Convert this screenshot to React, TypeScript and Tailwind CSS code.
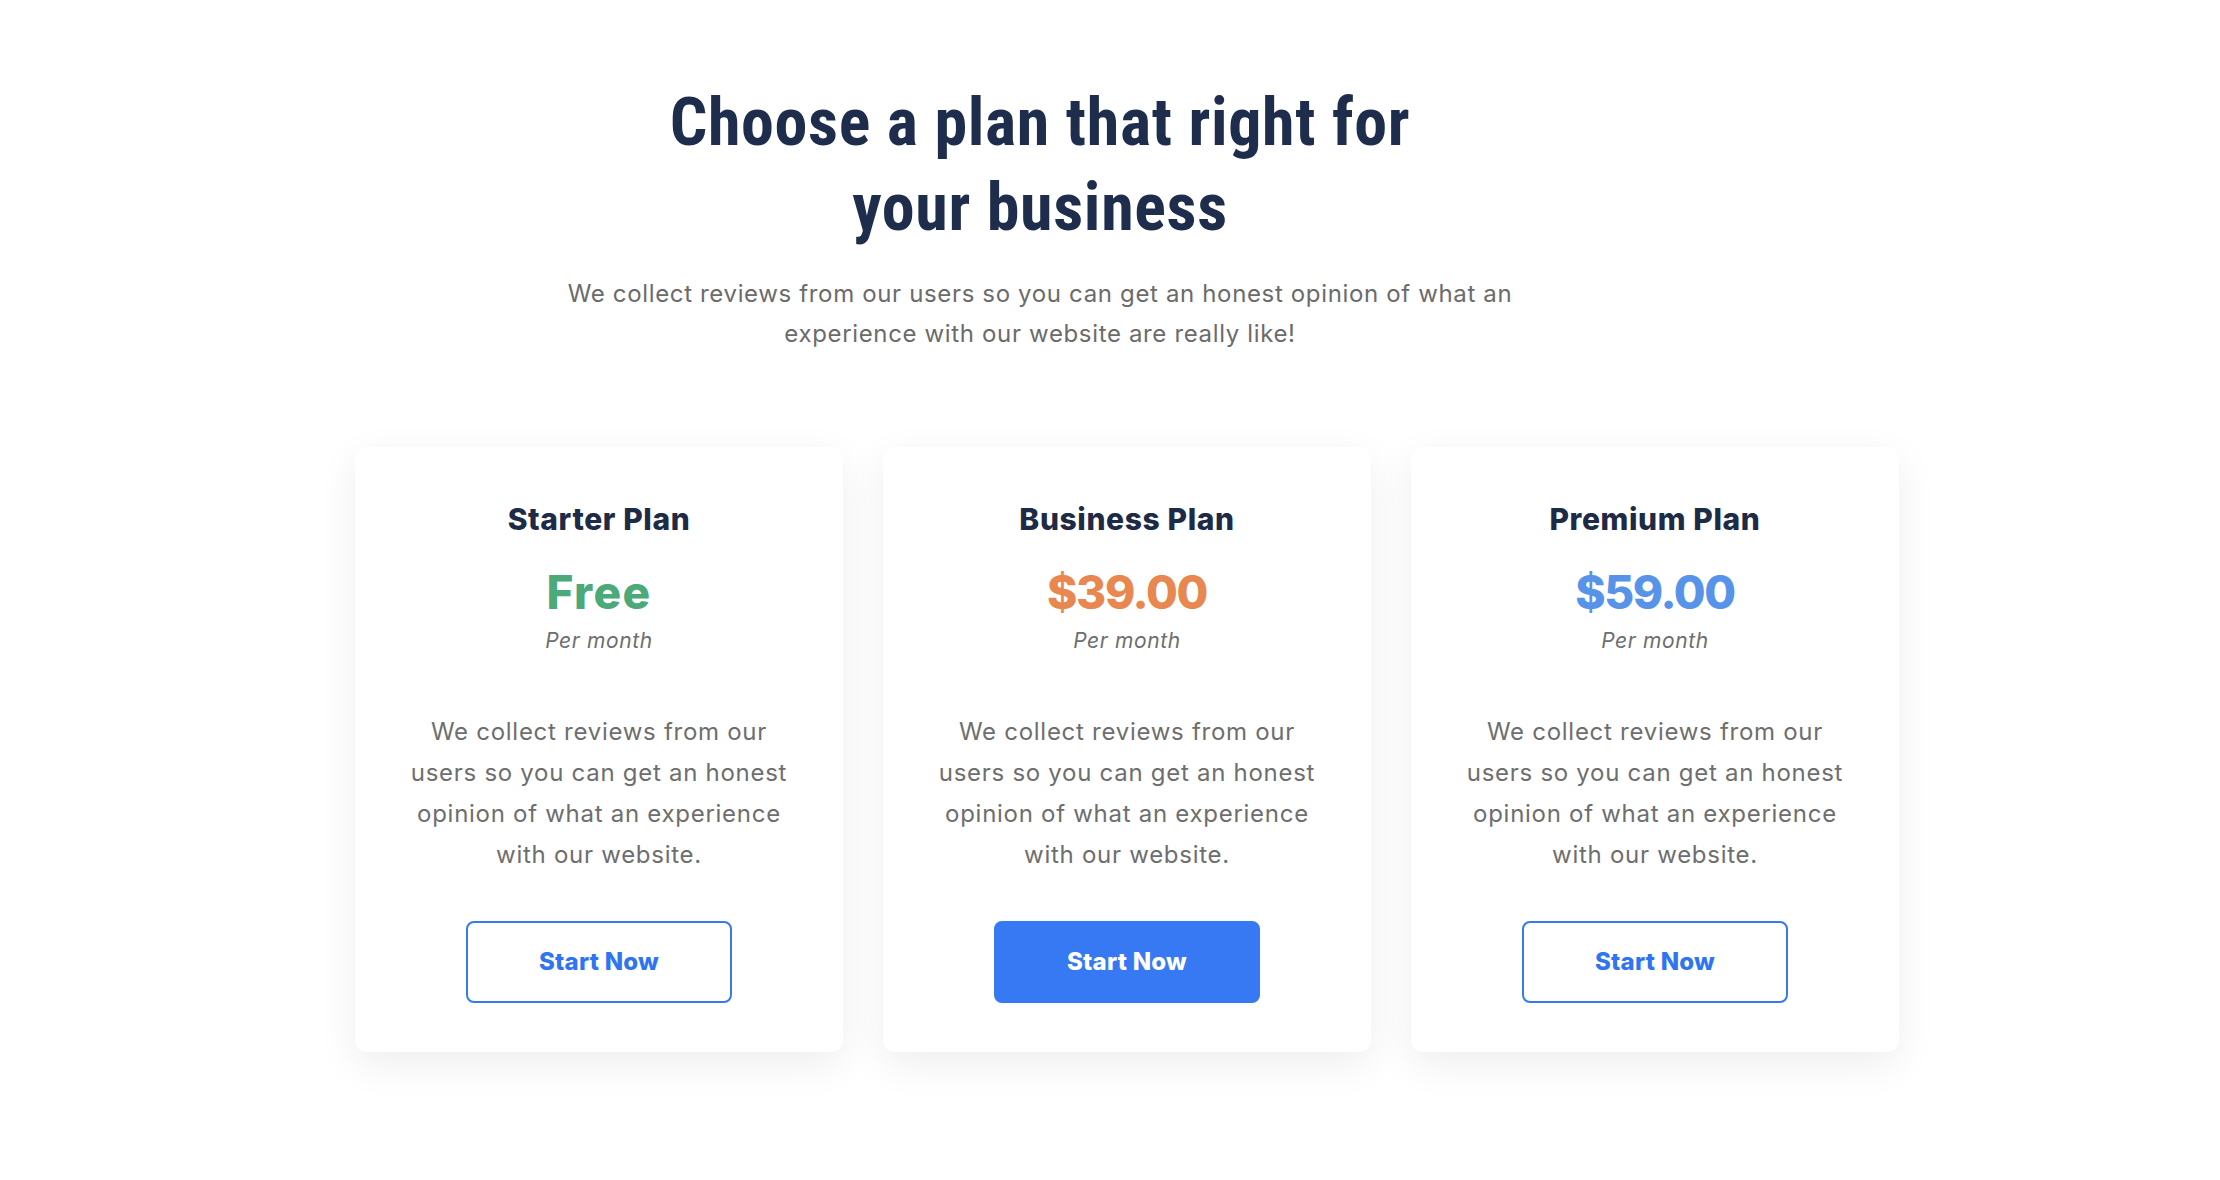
import React from "react";

const plans = [
  { name: "Starter Plan", price: "Free", color: "text-[#4ca97a] tracking-[0.03em]", primary: false },
  { name: "Business Plan", price: "$39.00", color: "text-[#e8874f] tracking-[-0.03em]", primary: true },
  { name: "Premium Plan", price: "$59.00", color: "text-[#5893ea] tracking-[-0.03em]", primary: false },
];

export default function App() {
  return (
    <div className="min-h-[1180px] w-full bg-white font-['Inter',sans-serif]">
      <div className="pl-[355px] pt-[80px] pb-[120px]">
        <div className="flex w-[1370px] flex-col items-center text-center">
          <h1 className="font-['Liberation_Sans_Narrow','Roboto_Condensed','DejaVu_Sans_Condensed','Inter',sans-serif] [font-stretch:condensed] text-[66px] font-bold leading-[85px] tracking-[0.01em] text-[#1e2d4b]">
            Choose a plan that right for
            <br />
            your business
          </h1>
          <p className="mt-[24px] text-[24px] leading-[40px] tracking-[0.027em] text-[#6b6b6b]">
            We collect reviews from our users so you can get an honest opinion of what an
            <br />
            experience with our website are really like!
          </p>
        </div>
        <div className="mt-[93px] flex gap-[40px]">
          {plans.map((p) => (
            <div
              key={p.name}
              className="flex w-[488px] flex-col items-center rounded-[12px] bg-white pt-[52px] pb-[49px] text-center shadow-[0_12px_40px_rgba(0,0,0,0.07)]"
            >
              <h2 className="text-[30px] font-extrabold leading-[40px] tracking-[0.02em] text-[#1d2b47]">{p.name}</h2>
              <div className={`mt-[25px] text-[46px] font-extrabold leading-[56px] ${p.color}`}>{p.price}</div>
              <div className="mt-[6px] text-[21px] italic leading-[30px] tracking-[0.03em] text-[#6e6e6e]">Per month</div>
              <p className="mt-[55px] text-[24px] leading-[41px] tracking-[0.03em] text-[#6e6e6e]">
                We collect reviews from our
                <br />
                users so you can get an honest
                <br />
                opinion of what an experience
                <br />
                with our website.
              </p>
              {p.primary ? (
                <button className="mt-[46px] flex h-[82px] w-[266px] items-center justify-center rounded-[8px] border-2 border-[#3679f3] bg-[#3679f3] text-[24px] font-extrabold tracking-[0.01em] text-white">
                  Start Now
                </button>
              ) : (
                <button className="mt-[46px] flex h-[82px] w-[266px] items-center justify-center rounded-[8px] border-2 border-[#3679f3] bg-white text-[24px] font-extrabold tracking-[0.01em] text-[#2f74f0]">
                  Start Now
                </button>
              )}
            </div>
          ))}
        </div>
      </div>
    </div>
  );
}
